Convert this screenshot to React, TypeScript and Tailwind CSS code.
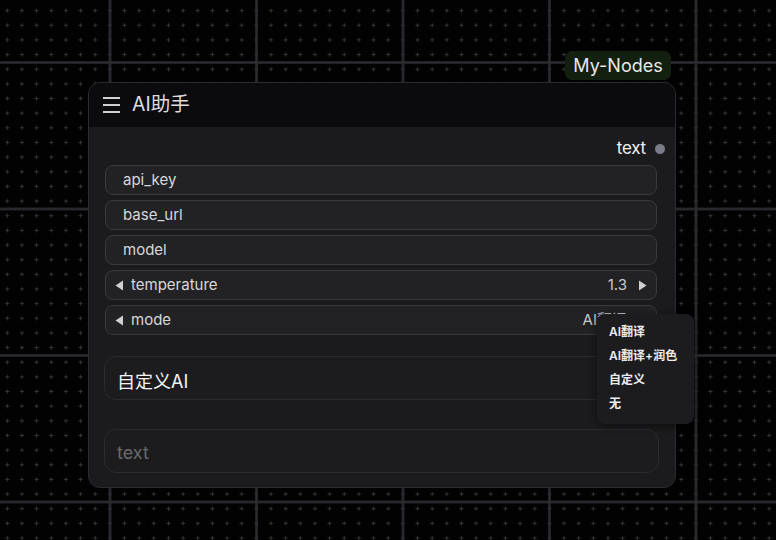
const widgets = [
  { name: "api_key" },
  { name: "base_url" },
  { name: "model" },
]

const menuItems = ["AI翻译", "AI翻译+润色", "自定义", "无"]

function CanvasGrid() {
  return (
    <svg className="absolute inset-0 h-full w-full" xmlns="http://www.w3.org/2000/svg">
      <defs>
        <pattern id="dots" x="0.02" y="3.3" width="14.65" height="14.65" patternUnits="userSpaceOnUse">
          <path d="M7.3 5.3v4M5.3 7.3h4" stroke="#37373a" strokeWidth="1" />
        </pattern>
        <pattern id="major" x="36.75" y="135.75" width="146.5" height="146.5" patternUnits="userSpaceOnUse">
          <path d="M73.25 0V146.5M0 73.25H146.5" stroke="#2b2d31" strokeWidth="2.5" />
        </pattern>
      </defs>
      <rect width="100%" height="100%" fill="#020203" />
      <rect width="100%" height="100%" fill="url(#dots)" />
      <rect width="100%" height="100%" fill="url(#major)" />
    </svg>
  )
}

function Arrow({ dir }: { dir: "left" | "right" }) {
  return (
    <svg width="9" height="11" viewBox="0 0 9 11" className="shrink-0">
      {dir === "left" ? <path d="M8 0.5V10.5L0.5 5.5Z" fill="#d0d0d2" /> : <path d="M1 0.5V10.5L8.5 5.5Z" fill="#d0d0d2" />}
    </svg>
  )
}

export default function App() {
  return (
    <div
      className="relative h-[540px] w-[776px] overflow-hidden bg-black"
      style={{ fontFamily: 'Inter, "Noto Sans CJK SC", sans-serif' }}
    >
      <CanvasGrid />

      {/* group badge */}
      <div className="absolute left-[565px] top-[51px] flex h-[29px] w-[106px] items-center justify-center rounded-[7px] bg-[#14200f] text-[18px] text-[#e8e8e8]">
        My-Nodes
      </div>

      {/* node */}
      <div className="absolute left-[88px] top-[82px] flex h-[406px] w-[588px] flex-col overflow-hidden rounded-[12px] border border-[#2c2c30] bg-[#1b1b1d]">
        <div className="flex h-[44px] shrink-0 items-center gap-[12px] bg-[#0b0b0d] pl-[14px]">
          <div className="flex w-[17px] flex-col gap-[4.8px]">
            <span className="h-[2px] bg-[#cfcfd2]" />
            <span className="h-[2px] bg-[#cfcfd2]" />
            <span className="h-[2px] bg-[#cfcfd2]" />
          </div>
          <span className="text-[19.5px] text-[#dedee0]">AI助手</span>
        </div>

        <div className="flex flex-1 flex-col pl-[16px] pr-[18px]">
          <div className="mt-[11px] flex h-[22px] items-center justify-end gap-[8px] pr-0">
            <span className="text-[17px] tracking-[-0.2px] text-[#f2f2f2]">text</span>
            <span className="mr-[-9px] h-[12px] w-[12px] rounded-full border border-[#1a1a1c] bg-[#7d7c8a]" />
          </div>

          <div className="mt-[5px] flex flex-col gap-[5px]">
            {widgets.map((w) => (
              <div
                key={w.name}
                className="flex h-[30px] items-center rounded-[8px] border border-[#3a3a3d] bg-[#222224] pl-[17px] text-[15px] text-[#d8d8da]"
              >
                {w.name}
              </div>
            ))}
            <div className="flex h-[30px] items-center rounded-[8px] border border-[#3a3a3d] bg-[#222224] pl-[9px] pr-[9px] text-[15px] text-[#d8d8da]">
              <Arrow dir="left" />
              <span className="ml-[7px]">temperature</span>
              <span className="ml-auto mr-[11px] text-[#c8c8ca]">1.3</span>
              <Arrow dir="right" />
            </div>
            <div className="flex h-[30px] items-center rounded-[8px] border border-[#3a3a3d] bg-[#222224] pl-[9px] pr-[9px] text-[15px] text-[#d8d8da]">
              <Arrow dir="left" />
              <span className="ml-[7px]">mode</span>
              <span className="ml-auto mr-[11px] text-[#c8c8ca]">AI翻译</span>
              <Arrow dir="right" />
            </div>
          </div>

          <div className="mt-[21px] -ml-[1px] mr-[-2px] flex h-[44px] items-start rounded-[12px] border border-[#2c2c2f] bg-[#1c1c1e] pl-[12px] pt-[11px] text-[18px] text-[#f4f4f4]">
            自定义AI
          </div>

          <div className="mt-[29px] -ml-[1px] mr-[-2px] flex h-[44px] items-start rounded-[12px] border border-[#2c2c2f] bg-[#1c1c1e] pl-[12px] pt-[9px] text-[18px] text-[#6a6a6c]">
            text
          </div>
        </div>
      </div>

      {/* combo menu */}
      <div className="absolute left-[597px] top-[314px] flex w-[97px] flex-col rounded-[8px] bg-[#1c1c1f] pb-[8px] pt-[6px] shadow-[0_2px_8px_rgba(0,0,0,0.5)]">
        {menuItems.map((item) => (
          <div key={item} className="flex h-[24px] items-center pl-[12px] text-[12px] font-semibold text-[#ececee]">
            {item}
          </div>
        ))}
      </div>
    </div>
  )
}
